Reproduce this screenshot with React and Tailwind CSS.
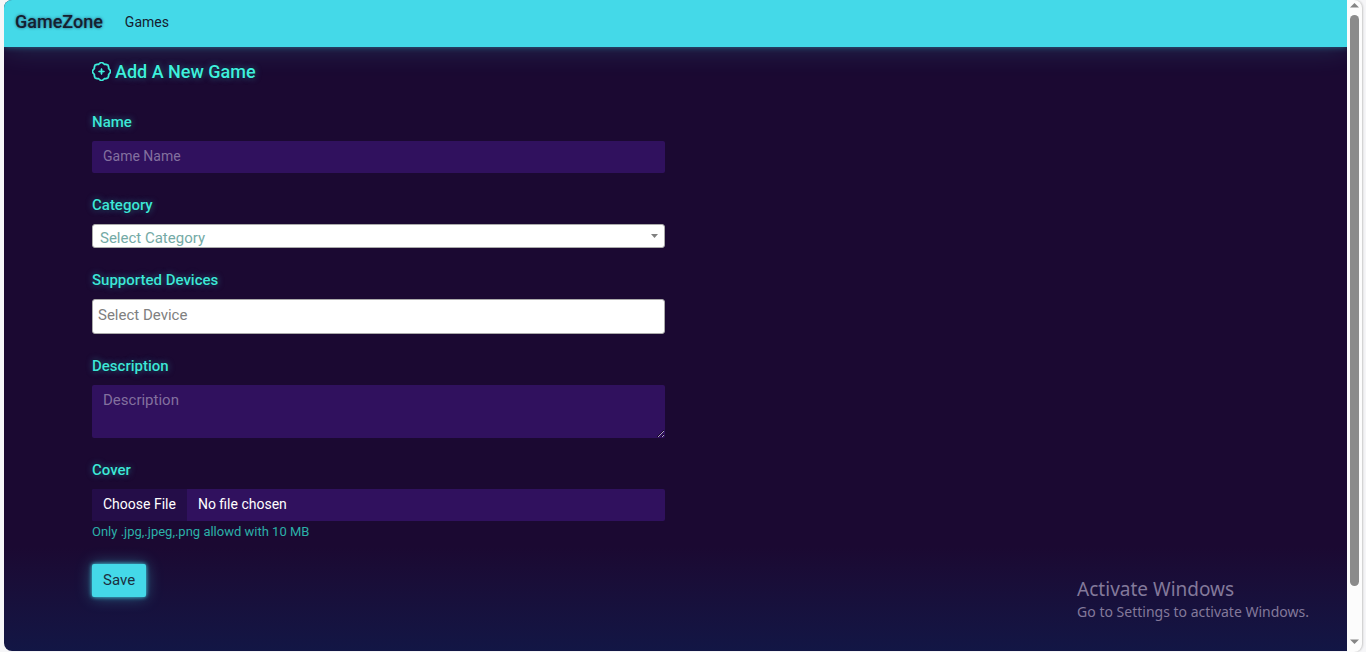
import { BsPatchPlus } from "react-icons/bs";

const glow = "[text-shadow:0_0_2px_#0b0a1e,0_0_6px_#44d9e880]";
const labelStyle =
  "mb-2 block text-[15px] leading-[21px] font-medium text-[#3ee6d8] " + glow;
const darkField =
  "block w-full rounded-[2px] bg-[#30115e] px-[11px] text-white placeholder:text-[#83709e] outline-none";

function Field({ id, label, children }) {
  return (
    <div>
      <label htmlFor={id} className={labelStyle}>
        {label}
      </label>
      {children}
    </div>
  );
}

function Scrollbar() {
  return (
    <div
      aria-hidden="true"
      className="flex w-[15px] shrink-0 flex-col items-center rounded-r-lg bg-[#fcfcfc] shadow-[1px_0_2px_#c8c8c8]"
    >
      <svg className="mt-[2px] mb-[5px] h-[7px] w-[9px]" viewBox="0 0 9 7">
        <path d="M4.5 1 9 5.5H0z" fill="#858585" />
      </svg>
      <div className="mt-px w-[9px] grow rounded-full bg-[#8b8b8b]" />
      <div className="flex h-[66px] items-end pb-[7px]">
        <svg className="h-[7px] w-[9px]" viewBox="0 0 9 7">
          <path d="M4.5 6 0 1.5h9z" fill="#858585" />
        </svg>
      </div>
    </div>
  );
}

export default function App() {
  return (
    <div className="flex min-h-screen bg-[#f6f6f8] pr-1 pl-1 font-['Roboto','Liberation_Sans',sans-serif]">
      <div className="relative mb-px flex min-w-0 grow flex-col overflow-hidden rounded-l-lg bg-[#1b0932] bg-linear-to-b from-[#1b0932] from-84% to-[#121645]">
        <nav className="flex h-[47px] items-center gap-[22px] bg-[#44d9e8] px-[11px] pb-1 text-[#14202f] shadow-[0_0_6px_#44d9e866,0_0_30px_#44d9e833]">
          <a
            href="#"
            className="text-[18px] leading-6 font-medium [text-shadow:0_0_3px_#17022999]"
          >
            GameZone
          </a>
          <a href="#games" className="text-[14px] leading-5">
            Games
          </a>
        </nav>

        <main className="px-[88px] pt-[14px]">
          <h1
            className={
              "mb-[30px] flex items-center gap-1 text-[18px] leading-[21px] font-medium text-[#3ff0dd] " +
              glow
            }
          >
            <BsPatchPlus className="size-[19px] shrink-0" strokeWidth="0.5" />
            Add A New Game
          </h1>

          <form
            className="grid grid-cols-2 gap-[22px]"
            onSubmit={(e) => e.preventDefault()}
          >
            <div className="flex flex-col gap-[22px]">
              <Field id="name" label="Name">
                <input
                  id="name"
                  type="text"
                  placeholder="Game Name"
                  className={darkField + " h-8 pb-[2px] text-[14px]"}
                />
              </Field>

              <Field id="category" label="Category">
                <div className="relative">
                  <select
                    id="category"
                    defaultValue=""
                    className="block h-6 w-full appearance-none rounded-[3px] border border-[#aaaaaa] bg-white px-[7px] pt-[2px] text-[15px] leading-[22px] text-[#74aaa6] outline-none"
                  >
                    <option value="">Select Category</option>
                  </select>
                  <svg
                    className="pointer-events-none absolute top-[10px] right-[7px] h-1 w-[7px]"
                    viewBox="0 0 7 4"
                  >
                    <path d="M0 0h7L3.500 4z" fill="#808080" />
                  </svg>
                </div>
              </Field>

              <Field id="devices" label="Supported Devices">
                <input
                  id="devices"
                  type="text"
                  placeholder="Select Device"
                  className="block h-[35px] w-full rounded-[3px] border border-[#aaaaaa] bg-white px-[5px] pb-[3px] text-[15px] text-[#555555] outline-none placeholder:text-[#808080]"
                />
              </Field>

              <Field id="description" label="Description">
                <textarea
                  id="description"
                  placeholder="Description"
                  className={
                    darkField +
                    " h-[53px] resize-y py-[5px] text-[15px] leading-[21px] [color-scheme:dark]"
                  }
                />
              </Field>

              <div>
                <label htmlFor="cover" className={labelStyle}>
                  Cover
                </label>
                <input
                  id="cover"
                  type="file"
                  accept=".jpg,.jpeg,.png"
                  className="block h-8 w-full rounded-[2px] bg-[#30115e] text-[14px] leading-[30px] text-white file:mr-[11px] file:h-8 file:bg-[#240d48] file:px-[11px] file:pb-[2px] file:text-[14px] file:text-white"
                />
                <small className="block text-[13px] leading-[21px] text-[#2bb0a8]">
                  Only .jpg,.jpeg,.png allowd with 10 MB
                </small>
              </div>

              <button
                type="submit"
                className="h-[33px] self-start rounded-[2px] bg-[#44d9e8] px-[11px] text-[15px] text-[#1b2f3f] shadow-[0_0_4px_#44d9e8,0_0_16px_#44d9e866]"
              >
                Save
              </button>
            </div>
          </form>
        </main>

        <aside className="absolute right-[38px] bottom-[29px] font-['Noto_Sans','Open_Sans',sans-serif] text-[#83799a]">
          <p className="text-[19px] leading-6">Activate Windows</p>
          <p className="text-[14px] leading-[21px]">
            Go to Settings to activate Windows.
          </p>
        </aside>
      </div>
      <Scrollbar />
    </div>
  );
}
